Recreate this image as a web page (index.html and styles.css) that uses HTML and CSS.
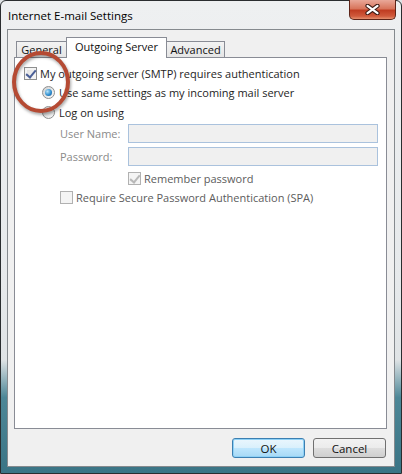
FILE: index.html
```html
<!DOCTYPE html>
<html lang="en">
<head>
    <meta charset="UTF-8">
    <title>Internet E-mail Settings</title>
    <link rel="stylesheet" href="styles.css">
</head>
<body>
<div class="window">
    <div class="titlebar">
        <span class="title">Internet E-mail Settings</span>
        <div class="close">
            <svg width="17" height="11" viewBox="0 0 17 11">
                <path d="M3.5 1.8 L13.5 9.2 M13.5 1.8 L3.5 9.2" stroke="#3b1a14" stroke-width="4.2" stroke-linecap="round"/>
                <path d="M3.5 1.8 L13.5 9.2 M13.5 1.8 L3.5 9.2" stroke="#ffffff" stroke-width="2.2" stroke-linecap="round"/>
            </svg>
        </div>
    </div>

    <div class="client">
        <div class="tabs">
            <div class="tab tab-general">General</div>
            <div class="tab tab-outgoing active">Outgoing Server</div>
            <div class="tab tab-advanced">Advanced</div>
        </div>

        <div class="panel">
            <div class="row row-auth">
                <span class="check checked"></span>
                <span class="text">My outgoing server (SMTP) requires authentication</span>
            </div>
            <div class="row row-radio">
                <span class="radio selected"></span>
                <span class="text">Use same settings as my incoming mail server</span>
            </div>
            <div class="row row-radio row-logon">
                <span class="radio"></span>
                <span class="text">Log on using</span>
            </div>
            <div class="row row-field">
                <span class="label">User Name:</span>
                <span class="field"></span>
            </div>
            <div class="row row-field row-pass">
                <span class="label">Password:</span>
                <span class="field"></span>
            </div>
            <div class="row row-remember">
                <span class="check disabled-checked"></span>
                <span class="text dim">Remember password</span>
            </div>
            <div class="row row-spa">
                <span class="check disabled"></span>
                <span class="text dim">Require Secure Password Authentication (SPA)</span>
            </div>
        </div>

        <div class="buttons">
            <button class="btn btn-default">OK</button>
            <button class="btn">Cancel</button>
        </div>
    </div>

    <!-- hand drawn highlight around the checkbox -->
    <svg class="annotation" width="70" height="72" viewBox="0 0 70 72">
        <ellipse cx="34" cy="35" rx="27" ry="29" fill="none" stroke="#b54a33" stroke-width="4"/>
    </svg>
</div>
</body>
</html>
```

FILE: styles.css
```css
* {
    box-sizing: border-box;
}

body {
    margin: 0;
    background: #dfe3e5;
    font-family: "Open Sans", "Noto Sans", sans-serif;
    font-size: 11px;
    color: #1e1e1e;
}

.window {
    position: relative;
    width: 402px;
    height: 474px;
    padding: 0 6px 6px 6px;
    border: 1px solid #2a2d2f;
    border-radius: 6px 6px 0 0;
    background: linear-gradient(to bottom, #eef0f1 0%, #e6e9eb 60%, #dfe3e5 76%, #4d8797 84%, #3a7485 100%);
}

.titlebar {
    display: flex;
    justify-content: space-between;
    align-items: flex-start;
    height: 28px;
}

.title {
    padding-left: 1px;
    margin-top: 7px;
    line-height: 16px;
    font-size: 11.5px;
    color: #000;
}

.close {
    display: flex;
    align-items: center;
    justify-content: center;
    width: 47px;
    height: 20px;
    margin-top: -1px;
    margin-right: -1px;
    border: 1px solid #5d2418;
    border-top: none;
    border-radius: 0 0 5px 5px;
    background: linear-gradient(to bottom, #e9a899 0%, #d8755c 45%, #c03d22 55%, #d05a3c 85%, #e5906e 100%);
}

.client {
    height: 438px;
    border: 1px solid #858a8e;
    background: #f0f0f0;
    padding: 7px 7px 0 6px;
}

.tabs {
    display: flex;
    align-items: flex-end;
    height: 20px;
    padding-left: 2px;
}

.tab {
    height: 16px;
    border: 1px solid #898c95;
    border-bottom: none;
    background: linear-gradient(to bottom, #f3f3f3, #e5e5e5);
    line-height: 15px;
    text-align: center;
    color: #111;
}

.tab + .tab {
    margin-left: -1px;
}

.tab-general {
    width: 51px;
}

.tab-outgoing {
    width: 101px;
}

.tab-advanced {
    width: 59px;
}

.tab.active {
    position: relative;
    z-index: 1;
    height: 21px;
    margin-bottom: -1px;
    background: #ffffff;
    line-height: 18px;
}

.panel {
    height: 372px;
    border: 1px solid #898c95;
    background: #ffffff;
    padding: 6px 0 0 9px;
}

.row {
    display: flex;
    align-items: center;
    height: 19px;
}

.row-radio {
    padding-left: 18px;
}

.row-logon {
    margin-top: 1px;
}

.row-field {
    margin-top: 2px;
    padding-left: 36px;
}

.row-pass {
    margin-top: 4px;
}

.row-remember {
    margin-top: 3px;
    padding-left: 104px;
}

.row-spa {
    padding-left: 36px;
}

.text {
    margin-left: 3px;
    white-space: nowrap;
}

.row-radio .text {
    margin-left: 4px;
}

.dim {
    color: #5c5c5c;
}

.label {
    width: 68px;
    color: #8a8a8a;
}

.field {
    width: 250px;
    height: 19px;
    border: 1px solid #aac2dd;
    background: #f0f0f0;
}

.check {
    position: relative;
    width: 13px;
    height: 13px;
    flex: none;
    border: 1px solid #8e8f8f;
    background: linear-gradient(135deg, #dcdcdc, #fbfbfb);
    box-shadow: inset 0 0 0 2px #f4f4f4;
}

.check.checked::after,
.check.disabled-checked::after {
    content: "";
    position: absolute;
    left: 3px;
    top: 0px;
    width: 4px;
    height: 8px;
    border-right: 2px solid #4a5f97;
    border-bottom: 2px solid #4a5f97;
    transform: rotate(40deg);
}

.check.disabled,
.check.disabled-checked {
    border-color: #b1b1b1;
    background: #f4f4f4;
    box-shadow: none;
}

.check.disabled-checked::after {
    border-color: #b8b8b8;
}

.radio {
    position: relative;
    width: 13px;
    height: 13px;
    flex: none;
    border: 1px solid #8e8f8f;
    border-radius: 50%;
    background: linear-gradient(135deg, #d0d0d0, #fbfbfb);
}

.radio.selected::after {
    content: "";
    position: absolute;
    left: 2px;
    top: 2px;
    width: 7px;
    height: 7px;
    border-radius: 50%;
    background: radial-gradient(circle at 35% 35%, #b9e3f8, #2f8fd0 55%, #1b4f8c);
}

.buttons {
    display: flex;
    justify-content: flex-end;
    gap: 8px;
    margin-top: 9px;
    padding-right: 1px;
}

.btn {
    width: 73px;
    height: 20px;
    padding: 0;
    border: 1px solid #707070;
    border-radius: 3px;
    background: linear-gradient(to bottom, #f2f2f2 0%, #ebebeb 50%, #dddddd 51%, #cfcfcf 100%);
    font-family: "Open Sans", "Noto Sans", sans-serif;
    font-size: 11.5px;
    color: #111;
}

.btn-default {
    border-color: #3c7fb1;
    background: linear-gradient(to bottom, #eaf6fd 0%, #d9f0fc 50%, #bee6fd 51%, #a7d9f5 100%);
    box-shadow: inset 0 0 0 1px #8ed1f6;
}

.annotation {
    position: absolute;
    left: 6px;
    top: 46px;
    filter: drop-shadow(1px 2px 1.5px rgba(0, 0, 0, 0.35));
}
```
